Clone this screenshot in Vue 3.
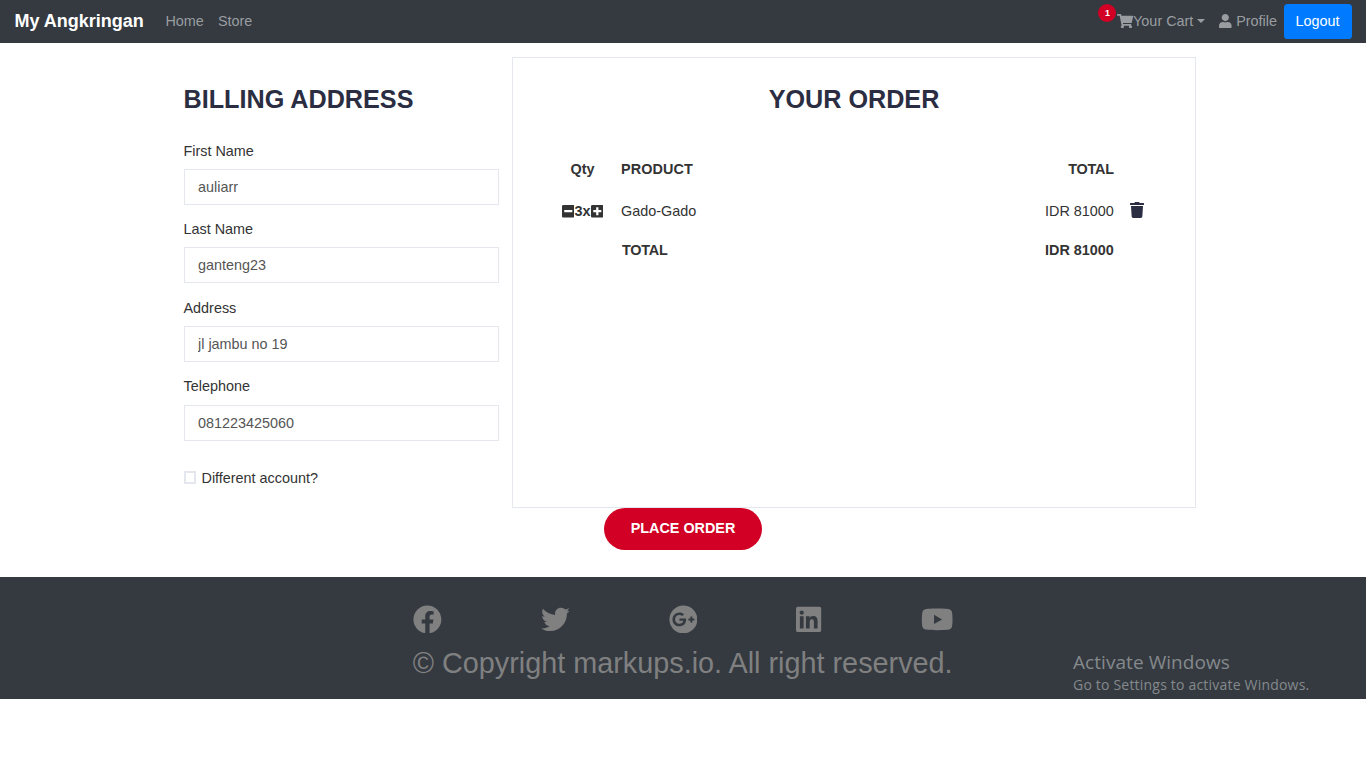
<script setup>
import { ref } from 'vue'

const fields = ref([
  { id: 'first-name', label: 'First Name', value: 'auliarr' },
  { id: 'last-name', label: 'Last Name', value: 'ganteng23' },
  { id: 'address', label: 'Address', value: 'jl jambu no 19' },
  { id: 'tel', label: 'Telephone', value: '081223425060' },
])

const social = [
  { name: 'facebook', w: 512, d: 'M504 256C504 119 393 8 256 8S8 119 8 256c0 123.78 90.69 226.38 209.25 245V327.69h-63V256h63v-54.64c0-62.15 37-96.48 93.67-96.48 27.14 0 55.52 4.84 55.52 4.84v61h-31.28c-30.8 0-40.41 19.12-40.41 38.73V256h68.78l-11 71.69h-57.78V501C413.31 482.38 504 379.78 504 256z' },
  { name: 'twitter', w: 512, d: 'M459.37 151.716c.325 4.548.325 9.097.325 13.645 0 138.72-105.583 298.558-298.558 298.558-59.452 0-114.68-17.219-161.137-47.106 8.447.974 16.568 1.299 25.34 1.299 49.055 0 94.213-16.568 130.274-44.832-46.132-.975-84.792-31.188-98.112-72.772 6.498.974 12.995 1.624 19.818 1.624 9.421 0 18.843-1.3 27.614-3.573-48.081-9.747-84.143-51.98-84.143-102.985v-1.299c13.969 7.797 30.214 12.67 47.431 13.319-28.264-18.843-46.781-51.005-46.781-87.391 0-19.492 5.197-37.36 14.294-52.954 51.655 63.675 129.3 105.258 216.365 109.807-1.624-7.797-2.599-15.918-2.599-24.04 0-57.828 46.782-104.934 104.934-104.934 30.213 0 57.502 12.67 76.67 33.137 23.715-4.548 46.456-13.32 66.599-25.34-7.798 24.366-24.366 44.833-46.132 57.827 21.117-2.273 41.584-8.122 60.426-16.243-14.292 20.791-32.161 39.308-52.628 54.253z' },
  { name: 'google-plus', w: 512, d: 'M256 8C119.1 8 8 119.1 8 256s111.1 248 248 248 248-111.1 248-248S392.9 8 256 8zm-70.7 372c-68.8 0-124-55.5-124-124s55.2-124 124-124c31.3 0 60.1 11 83 32.3l-33.6 32.6c-13.2-12.9-31.3-19.1-49.4-19.1-42.9 0-77.2 35.5-77.2 78.1s34.2 78.1 77.2 78.1c32.6 0 64.9-19.1 70.1-53.3h-70.1v-42.6h116.9c1.3 6.8 1.9 13.6 1.9 20.7 0 70.8-47.5 121.2-118.8 121.2zm230.2-106.2v35.5H380v-35.5h-35.5v-35.5H380v-35.5h35.5v35.5h35.2v35.5h-35.2z' },
  { name: 'linkedin', w: 448, d: 'M416 32H31.9C14.3 32 0 46.5 0 64.3v383.4C0 465.5 14.3 480 31.9 480H416c17.6 0 32-14.5 32-32.3V64.3c0-17.8-14.4-32.3-32-32.3zM135.4 416H69V202.2h66.5V416zm-33.2-243c-21.3 0-38.5-17.3-38.5-38.5S80.9 96 102.2 96c21.2 0 38.5 17.3 38.5 38.5 0 21.3-17.2 38.5-38.5 38.5zm282.1 243h-66.4V312c0-24.8-.5-56.7-34.5-56.7-34.6 0-39.9 27-39.9 54.9V416h-66.4V202.2h63.7v29.2h.9c8.9-16.8 30.6-34.5 62.9-34.5 67.2 0 79.7 44.3 79.7 101.9V416z' },
  { name: 'youtube', w: 576, d: 'M549.655 124.083c-6.281-23.65-24.787-42.276-48.284-48.597C458.781 64 288 64 288 64S117.22 64 74.629 75.486c-23.497 6.322-42.003 24.947-48.284 48.597-11.412 42.867-11.412 132.305-11.412 132.305s0 89.438 11.412 132.305c6.281 23.65 24.787 41.5 48.284 47.821C117.22 448 288 448 288 448s170.78 0 213.371-11.486c23.497-6.321 42.003-24.171 48.284-47.821 11.412-42.867 11.412-132.305 11.412-132.305s0-89.438-11.412-132.305zm-317.51 213.508V175.185l142.739 81.205-142.739 81.201z' },
]
</script>

<template>
  <div class="page">
    <nav class="navbar">
      <a class="brand">My Angkringan</a>
      <a class="link">Home</a>
      <a class="link">Store</a>
      <div class="right">
        <a class="cart">
          <span class="badge">1</span>
          <svg class="cart-icon" viewBox="0 0 576 512"><path d="M528.12 301.319l47.273-208C578.806 78.301 567.391 64 551.99 64H159.208l-9.166-44.81C147.758 8.021 137.93 0 126.529 0H24C10.745 0 0 10.745 0 24v16c0 13.255 10.745 24 24 24h69.883l70.248 343.435C147.325 417.1 136 435.222 136 456c0 30.928 25.072 56 56 56s56-25.072 56-56c0-15.674-6.447-29.835-16.824-40h209.647C430.447 426.165 424 440.326 424 456c0 30.928 25.072 56 56 56s56-25.072 56-56c0-22.172-12.888-41.332-31.579-50.405l5.517-24.276c3.413-15.018-8.002-29.319-23.403-29.319H218.117l-6.545-32h293.145c11.206 0 20.92-7.754 23.403-18.681z" /></svg>
          <span>Your Cart</span>
          <i class="caret"></i>
        </a>
        <a class="profile">
          <svg class="user-icon" viewBox="0 0 448 512"><path d="M224 256c70.7 0 128-57.3 128-128S294.7 0 224 0 96 57.3 96 128s57.3 128 128 128zm89.6 32h-16.7c-22.2 10.2-46.9 16-72.9 16s-50.6-5.8-72.9-16h-16.7C60.2 288 0 348.2 0 422.4V464c0 26.5 21.5 48 48 48h352c26.5 0 48-21.5 48-48v-41.6c0-74.2-60.2-134.4-134.4-134.4z" /></svg>
          <span>Profile</span>
        </a>
        <button class="logout">Logout</button>
      </div>
    </nav>

    <main class="content">
      <section class="billing">
        <h3 class="title">BILLING ADDRESS</h3>
        <div v-for="f in fields" :key="f.id" class="field">
          <label :for="f.id">{{ f.label }}</label>
          <input :id="f.id" v-model="f.value" type="text" />
        </div>
        <div class="check"><i class="box"></i><span>Different account?</span></div>
      </section>

      <section class="order">
        <h3 class="title">YOUR ORDER</h3>
        <div class="row head">
          <span class="qty">Qty</span>
          <span class="product">PRODUCT</span>
          <span class="sum spaced">TOTAL</span>
        </div>
        <div class="row item">
          <span class="qty">
            <svg viewBox="0 0 448 512"><path d="M400 32H48C21.5 32 0 53.5 0 80v352c0 26.5 21.5 48 48 48h352c26.5 0 48-21.5 48-48V80c0-26.5-21.5-48-48-48zM92 296c-6.6 0-12-5.4-12-12v-56c0-6.6 5.4-12 12-12h264c6.6 0 12 5.4 12 12v56c0 6.6-5.4 12-12 12H92z" /></svg>
            <span>3x</span>
            <svg viewBox="0 0 448 512"><path d="M400 32H48C21.5 32 0 53.5 0 80v352c0 26.5 21.5 48 48 48h352c26.5 0 48-21.5 48-48V80c0-26.5-21.5-48-48-48zm-32 252c0 6.6-5.4 12-12 12h-92v92c0 6.6-5.4 12-12 12h-56c-6.6 0-12-5.4-12-12v-92H92c-6.6 0-12-5.4-12-12v-56c0-6.6 5.4-12 12-12h92v-92c0-6.6 5.4-12 12-12h56c6.6 0 12 5.4 12 12v92h92c6.6 0 12 5.4 12 12v56z" /></svg>
          </span>
          <span class="product">Gado-Gado</span>
          <span class="sum">IDR 81000</span>
          <svg class="trash" viewBox="0 0 448 512"><path d="M432 32H312l-9.4-18.7A24 24 0 0 0 281.1 0H166.8a23.72 23.72 0 0 0-21.4 13.3L136 32H16A16 16 0 0 0 0 48v32a16 16 0 0 0 16 16h416a16 16 0 0 0 16-16V48a16 16 0 0 0-16-16zM53.2 467a48 48 0 0 0 47.9 45h245.8a48 48 0 0 0 47.9-45L416 128H32z" /></svg>
        </div>
        <div class="row total">
          <span></span>
          <span class="total-label">TOTAL</span>
          <span class="sum">IDR 81000</span>
        </div>
      </section>
    </main>

    <button class="place">PLACE ORDER</button>

    <footer class="footer">
      <div class="footer-inner">
        <div class="social">
          <svg v-for="s in social" :key="s.name" :class="s.name" :viewBox="`0 0 ${s.w} 512`"><path :d="s.d" /></svg>
        </div>
        <p class="copy">© Copyright markups.io. All right reserved.</p>
      </div>
      <div class="watermark">
        <div class="wm-title">Activate Windows</div>
        <div class="wm-text">Go to Settings to activate Windows.</div>
      </div>
    </footer>
  </div>
</template>

<style>
body {
  margin: 0;
  background: #fff;
}
</style>

<style scoped>
* {
  box-sizing: border-box;
}
.page {
  font-family: "Liberation Sans", Arial, sans-serif;
  font-size: 14.4px;
  line-height: 21.6px;
  color: #333;
  white-space: nowrap;
}
svg {
  display: block;
  fill: currentColor;
  flex: none;
}
.navbar {
  height: 43px;
  background: #343a40;
  color: #9a9da0;
  display: flex;
  align-items: center;
  padding: 0 14.4px;
}
.brand {
  width: 151px;
  font-size: 18px;
  font-weight: 700;
  color: #fff;
}
.link {
  margin-right: 14.2px;
}
.right {
  margin-left: auto;
  display: flex;
  align-items: center;
}
.cart {
  display: flex;
  align-items: center;
  position: relative;
  margin-right: 14.4px;
}
.cart-icon {
  width: 16.2px;
  height: 14.4px;
  margin-top: -1px;
}
.badge {
  position: absolute;
  left: -19px;
  top: -6.5px;
  width: 18px;
  height: 18px;
  border-radius: 50%;
  background: #d10024;
  color: #fff;
  font-size: 9px;
  font-weight: 700;
  line-height: 18px;
  text-align: center;
  padding-left: 1px;
}
.caret {
  margin-left: 3.7px;
  margin-top: -2px;
  border: 4.3px solid transparent;
  border-top-color: currentColor;
  border-bottom: 0;
}
.profile {
  display: flex;
  align-items: center;
  gap: 4.2px;
  margin-right: 6.6px;
}
.user-icon {
  width: 12.6px;
  height: 14.4px;
  margin-top: -1px;
}
.logout {
  width: 68px;
  height: 35px;
  border: 0;
  border-radius: 3.6px;
  background: #007bff;
  color: #fff;
  font: inherit;
  padding: 0;
}
.content {
  width: 1012.5px;
  margin-left: 183.5px;
  padding-top: 14px;
  display: flex;
  justify-content: space-between;
}
.billing {
  width: 315.5px;
  padding-top: 28px;
}
.title {
  margin: 0;
  font-size: 25.2px;
  line-height: 28px;
  font-weight: 700;
  color: #2b2d42;
}
.billing .title {
  margin-bottom: 27.7px;
}
.field {
  height: 78.6px;
}
.field label {
  display: block;
  margin-bottom: 6.5px;
}
.field input {
  display: block;
  width: 100%;
  height: 36px;
  border: 1px solid #e4e7ed;
  padding: 0 13.5px;
  font: inherit;
  color: #555;
  background: #fff;
  outline: 0;
}
.check {
  display: flex;
  align-items: center;
  gap: 5.4px;
  margin-top: 12.5px;
}
.box {
  width: 12.6px;
  height: 12.6px;
  margin-top: -2px;
  border: 2px solid #e4e7ed;
}
.order {
  width: 684px;
  height: 451px;
  border: 1px solid #e4e7ed;
  padding: 27px 48px 0;
}
.order .title {
  text-align: center;
  margin-bottom: 46px;
}
.row {
  display: grid;
  grid-template-columns: 43px 1fr 120px 30px;
  align-items: center;
  height: 22px;
  padding-right: 3.2px;
}
.product {
  padding-left: 17px;
}
.head,
.total {
  font-weight: 700;
}
.head .product {
  letter-spacing: 0.12px;
}
.item {
  margin-top: 20px;
}
.total {
  margin-top: 17px;
}
.total-label {
  padding-left: 18px;
  letter-spacing: -0.2px;
}
.sum.spaced {
  letter-spacing: -0.2px;
}
.qty {
  display: flex;
  justify-content: center;
  align-items: center;
  font-weight: 700;
}
.qty svg {
  width: 12.6px;
  height: 14.4px;
  margin-top: -2px;
}
.sum {
  text-align: right;
}
.trash {
  width: 14px;
  height: 16px;
  margin-top: -4px;
  justify-self: end;
  color: #2b2d42;
}
.place {
  display: block;
  width: 158px;
  height: 42px;
  margin: 0 auto 27px;
  padding: 0;
  border: 0;
  border-radius: 21px;
  background: #d10024;
  color: #fff;
  font: inherit;
  font-weight: 700;
}
.footer {
  position: relative;
  height: 122px;
  background: #343a40;
  color: gray;
  padding-top: 20px;
}
.footer-inner {
  width: 540.4px;
  margin: 0 auto;
}
.social {
  height: 44px;
  display: flex;
  align-items: center;
  justify-content: space-between;
}
.social svg {
  width: 28.8px;
  height: 28.8px;
}
.social .linkedin {
  width: 25.2px;
}
.social .youtube {
  width: 32.4px;
}
.copy {
  margin: 0;
  font-size: 28.8px;
  line-height: 44px;
}
.watermark {
  position: absolute;
  left: 1073px;
  top: 73px;
  font-family: "Open Sans", "Noto Sans", sans-serif;
  color: #85898c;
}
.wm-title {
  font-size: 19px;
  line-height: 24px;
  letter-spacing: 0.06px;
}
.wm-text {
  font-size: 14px;
  line-height: 22px;
  letter-spacing: 0.2px;
}
</style>
